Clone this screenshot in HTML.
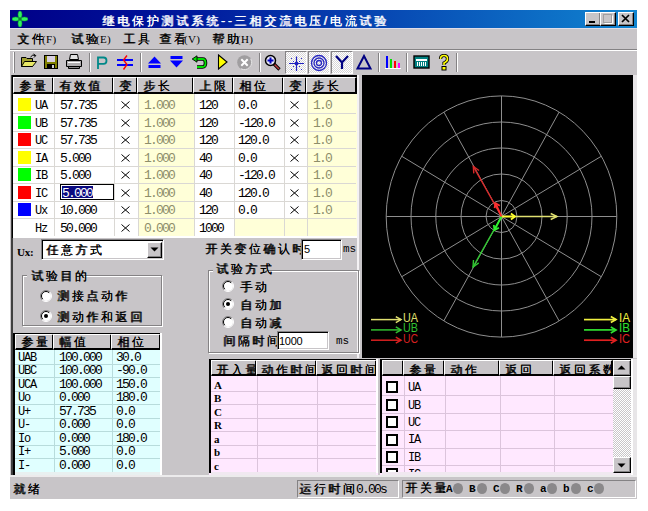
<!DOCTYPE html><html><head><meta charset="utf-8"><title>继电保护测试系统--三相交流电压/电流试验</title><style>
html,body{margin:0;padding:0;background:#fff;width:648px;height:511px;overflow:hidden;position:relative;}
div{box-sizing:border-box;}
svg{display:block;}
</style></head><body>
<div style="position:absolute;left:10px;top:28px;width:627px;height:471px;background:#c8c5c8;"></div>
<div style="position:absolute;left:10px;top:10px;width:627px;height:18px;background:linear-gradient(to right,#000088 0%,#00149a 25%,#1084d0 100%);"></div>
<svg style="position:absolute;left:12px;top:10px" width="16" height="18" viewBox="0 0 16 18"><g fill="#30f060" stroke="#10a030" stroke-width="0.6"><ellipse cx="8" cy="4.6" rx="2" ry="3.6"/><ellipse cx="8" cy="13.4" rx="2" ry="3.6"/><ellipse cx="3.6" cy="9" rx="3.6" ry="2"/><ellipse cx="12.4" cy="9" rx="3.6" ry="2"/></g><rect x="6.5" y="7.5" width="3" height="3" fill="#108030"/></svg>
<div style="position:absolute;left:102px;top:15px;font-family:'Liberation Sans',sans-serif;font-size:12px;line-height:12px;letter-spacing:2.6px;white-space:nowrap;text-shadow:0.7px 0.4px 0 currentColor;color:#fff;letter-spacing:2.85px;">继电保护测试系统--三相交流电压/电流试验</div>
<div style="position:absolute;left:585px;top:12px;width:16px;height:14px;background:#c8c5c8;border-top:1px solid #fff;border-left:1px solid #fff;border-right:1px solid #000;border-bottom:1px solid #000;box-shadow:inset -1px -1px 0 #848284;"></div>
<svg style="position:absolute;left:585px;top:12px" width="16" height="14" viewBox="0 0 16 14"><rect x="4" y="9" width="6" height="2" fill="#000"/></svg>
<div style="position:absolute;left:600px;top:12px;width:16px;height:14px;background:#c8c5c8;border-top:1px solid #fff;border-left:1px solid #fff;border-right:1px solid #000;border-bottom:1px solid #000;box-shadow:inset -1px -1px 0 #848284;"></div>
<svg style="position:absolute;left:600px;top:12px" width="16" height="14" viewBox="0 0 16 14"><rect x="3.5" y="2.5" width="8" height="8" fill="none" stroke="#a09ea0"/><path d="M4.5 11.5 H12.5 V3.5" stroke="#fff" fill="none"/></svg>
<div style="position:absolute;left:618px;top:12px;width:16px;height:14px;background:#c8c5c8;border-top:1px solid #fff;border-left:1px solid #fff;border-right:1px solid #000;border-bottom:1px solid #000;box-shadow:inset -1px -1px 0 #848284;"></div>
<svg style="position:absolute;left:618px;top:12px" width="16" height="14" viewBox="0 0 16 14"><path d="M4 3 L11 10 M11 3 L4 10" stroke="#000" stroke-width="1.7"/></svg>
<div style="position:absolute;left:10px;top:28px;width:627px;height:1px;background:#e0dde8;"></div>
<div style="position:absolute;left:17px;top:33px;font-family:'Liberation Sans',sans-serif;font-size:12px;line-height:12px;letter-spacing:2.6px;white-space:nowrap;text-shadow:0.7px 0.4px 0 currentColor;color:#000;">文件</div>
<div style="position:absolute;left:42px;top:33px;font-family:'Liberation Serif',serif;font-size:12px;line-height:12px;white-space:nowrap;color:#000;font-size:11px;letter-spacing:0.3px;">(F)</div>
<div style="position:absolute;left:71px;top:33px;font-family:'Liberation Sans',sans-serif;font-size:12px;line-height:12px;letter-spacing:2.6px;white-space:nowrap;text-shadow:0.7px 0.4px 0 currentColor;color:#000;">试验</div>
<div style="position:absolute;left:96px;top:33px;font-family:'Liberation Serif',serif;font-size:12px;line-height:12px;white-space:nowrap;color:#000;font-size:11px;letter-spacing:0.3px;">(E)</div>
<div style="position:absolute;left:123px;top:33px;font-family:'Liberation Sans',sans-serif;font-size:12px;line-height:12px;letter-spacing:2.6px;white-space:nowrap;text-shadow:0.7px 0.4px 0 currentColor;color:#000;">工具</div>
<div style="position:absolute;left:159px;top:33px;font-family:'Liberation Sans',sans-serif;font-size:12px;line-height:12px;letter-spacing:2.6px;white-space:nowrap;text-shadow:0.7px 0.4px 0 currentColor;color:#000;">查看</div>
<div style="position:absolute;left:184px;top:33px;font-family:'Liberation Serif',serif;font-size:12px;line-height:12px;white-space:nowrap;color:#000;font-size:11px;letter-spacing:0.3px;">(V)</div>
<div style="position:absolute;left:212px;top:33px;font-family:'Liberation Sans',sans-serif;font-size:12px;line-height:12px;letter-spacing:2.6px;white-space:nowrap;text-shadow:0.7px 0.4px 0 currentColor;color:#000;">帮助</div>
<div style="position:absolute;left:237px;top:33px;font-family:'Liberation Serif',serif;font-size:12px;line-height:12px;white-space:nowrap;color:#000;font-size:11px;letter-spacing:0.3px;">(H)</div>
<div style="position:absolute;left:10px;top:49px;width:627px;height:1px;background:#848284;"></div>
<div style="position:absolute;left:10px;top:50px;width:627px;height:1px;background:#fff;"></div>
<div style="position:absolute;left:13px;top:52px;width:1px;height:21px;background:#fff;"></div>
<div style="position:absolute;left:14px;top:52px;width:1px;height:21px;background:#848284;"></div>
<div style="position:absolute;left:89px;top:53px;width:1px;height:19px;background:#848284;"></div>
<div style="position:absolute;left:90px;top:53px;width:1px;height:19px;background:#fff;"></div>
<div style="position:absolute;left:140px;top:53px;width:1px;height:19px;background:#848284;"></div>
<div style="position:absolute;left:141px;top:53px;width:1px;height:19px;background:#fff;"></div>
<div style="position:absolute;left:259px;top:53px;width:1px;height:19px;background:#848284;"></div>
<div style="position:absolute;left:260px;top:53px;width:1px;height:19px;background:#fff;"></div>
<div style="position:absolute;left:378px;top:53px;width:1px;height:19px;background:#848284;"></div>
<div style="position:absolute;left:379px;top:53px;width:1px;height:19px;background:#fff;"></div>
<div style="position:absolute;left:406px;top:53px;width:1px;height:19px;background:#848284;"></div>
<div style="position:absolute;left:407px;top:53px;width:1px;height:19px;background:#fff;"></div>
<div style="position:absolute;left:456px;top:53px;width:1px;height:19px;background:#848284;"></div>
<div style="position:absolute;left:457px;top:53px;width:1px;height:19px;background:#fff;"></div>
<div style="position:absolute;left:285px;top:51px;width:22px;height:23px;background:repeating-conic-gradient(#ffffff 0% 25%, #d8d6d8 0% 50%) 0 0/2px 2px;border-top:1px solid #848284;border-left:1px solid #848284;border-right:1px solid #fff;border-bottom:1px solid #fff;"></div>
<div style="position:absolute;left:308px;top:51px;width:22px;height:23px;background:repeating-conic-gradient(#ffffff 0% 25%, #d8d6d8 0% 50%) 0 0/2px 2px;border-top:1px solid #848284;border-left:1px solid #848284;border-right:1px solid #fff;border-bottom:1px solid #fff;"></div>
<div style="position:absolute;left:331px;top:51px;width:22px;height:23px;background:repeating-conic-gradient(#ffffff 0% 25%, #d8d6d8 0% 50%) 0 0/2px 2px;border-top:1px solid #848284;border-left:1px solid #848284;border-right:1px solid #fff;border-bottom:1px solid #fff;"></div>
<svg style="position:absolute;left:20px;top:53px" width="18" height="16" viewBox="0 0 18 16"><path d="M1.5 4.5 H6 L7 5.5 H12.5 V13.5 H1.5 Z" fill="#a0a030" stroke="#000"/><path d="M1.5 13.5 L4.5 8.5 H16.5 L12.5 13.5 Z" fill="#e8e868" stroke="#000"/><path d="M10.5 4 Q12.5 1 15.5 2.5" stroke="#000" fill="none"/><path d="M13.5 1 L15.8 2.6 L14 4.5" stroke="#000" fill="none"/></svg>
<svg style="position:absolute;left:43px;top:54px" width="16" height="16" viewBox="0 0 16 16"><rect x="1.5" y="1.5" width="13" height="13" fill="#808000" stroke="#000"/><rect x="4" y="2" width="8" height="6" fill="#d8d0e0"/><rect x="4" y="10" width="8" height="5" fill="#000"/><rect x="9" y="11" width="2" height="3" fill="#d0d0d0"/></svg>
<svg style="position:absolute;left:65px;top:53px" width="18" height="17" viewBox="0 0 18 17"><path d="M5.5 1.5 H12.5 L13.5 6.5 H4.5 Z" fill="#e0e0e0" stroke="#000"/><path d="M1.5 7.5 H16.5 V13.5 H1.5 Z" fill="#b0aeb0" stroke="#000"/><rect x="3" y="9" width="12" height="1" fill="#fff"/><path d="M3.5 13.5 H14.5 V15.5 H3.5 Z" fill="#848284" stroke="#000" stroke-width="1"/></svg>
<svg style="position:absolute;left:95px;top:54px" width="14" height="16" viewBox="0 0 14 16"><path d="M3 15 V3.5 H8.5 Q11.5 3.5 11.5 6.7 Q11.5 9.8 8.5 9.8 H3" fill="none" stroke="#008888" stroke-width="1.8"/></svg>
<svg style="position:absolute;left:116px;top:54px" width="18" height="17" viewBox="0 0 18 17"><rect x="1" y="5" width="16" height="2" fill="#0000ff"/><rect x="1" y="10" width="16" height="2" fill="#0000ff"/><path d="M11 1.5 L7.5 6 L11 10.5 L7.5 15.5" fill="none" stroke="#ff0000" stroke-width="1.4"/></svg>
<svg style="position:absolute;left:147px;top:55px" width="15" height="14" viewBox="0 0 15 14"><path d="M7.5 1.5 L14 8.5 H1 Z" fill="#0000ff"/><rect x="1.5" y="10" width="12" height="3" fill="#0000ff"/></svg>
<svg style="position:absolute;left:169px;top:55px" width="15" height="14" viewBox="0 0 15 14"><rect x="1.5" y="1" width="12" height="3" fill="#0000ff"/><path d="M1 5.5 H14 L7.5 12.5 Z" fill="#0000ff"/></svg>
<svg style="position:absolute;left:191px;top:55px" width="17" height="14" viewBox="0 0 17 14"><path d="M4.5 4 H11.5 Q14.5 4 14.5 8 Q14.5 12 11.5 12 H6" fill="none" stroke="#000" stroke-width="3.6"/><path d="M4.5 4 H11.5 Q14.5 4 14.5 8 Q14.5 12 11.5 12 H6" fill="none" stroke="#00e000" stroke-width="1.8"/><path d="M1.2 4 L6 0.8 V7.2 Z" fill="#00e000" stroke="#000" stroke-width="0.9"/></svg>
<svg style="position:absolute;left:217px;top:54px" width="11" height="16" viewBox="0 0 11 16"><path d="M1.5 1 L10 8 L1.5 15 Z" fill="#ffff00" stroke="#000" stroke-width="1.1"/></svg>
<svg style="position:absolute;left:236px;top:54px" width="17" height="17" viewBox="0 0 17 17"><circle cx="8.5" cy="8.5" r="7.3" fill="#a09ea0"/><path d="M5.3 5.3 L11.7 11.7 M11.7 5.3 L5.3 11.7" stroke="#fff" stroke-width="2"/><path d="M14.8 5 A7.3 7.3 0 0 1 5 14.8" fill="none" stroke="#e8e8e8" stroke-width="1"/></svg>
<svg style="position:absolute;left:264px;top:54px" width="17" height="17" viewBox="0 0 17 17"><path d="M10 10 L15.5 15.5" stroke="#000" stroke-width="3.2"/><path d="M10.5 10.5 L15 15" stroke="#c04040" stroke-width="1.4"/><circle cx="6.5" cy="6.5" r="5" fill="#e8e8f8" stroke="#000" stroke-width="1.5"/><path d="M3.5 6.5 H9.5 M6.5 3.5 V9.5" stroke="#0000c0" stroke-width="2"/></svg>
<svg style="position:absolute;left:286px;top:55px" width="20" height="17" viewBox="0 0 20 17"><path d="M3 8.5 H18 M10.5 1.5 V16" stroke="#2020c0" stroke-width="1.2"/><rect x="9" y="7" width="3" height="3" fill="#2020c0"/><g fill="#3030d0"><rect x="7" y="6" width="1" height="1"/><rect x="13" y="6" width="1" height="1"/><rect x="7" y="11" width="1" height="1"/><rect x="13" y="11" width="1" height="1"/><rect x="5" y="3" width="1" height="1"/><rect x="15" y="3" width="1" height="1"/><rect x="5" y="14" width="1" height="1"/><rect x="15" y="14" width="1" height="1"/></g></svg>
<svg style="position:absolute;left:310px;top:54px" width="18" height="18" viewBox="0 0 18 18"><circle cx="9" cy="9" r="7.5" fill="none" stroke="#2828c0" stroke-width="1.3"/><circle cx="9" cy="9" r="5" fill="none" stroke="#2828c0" stroke-width="1.3"/><circle cx="9" cy="9" r="2.5" fill="none" stroke="#2828c0" stroke-width="1.3"/></svg>
<svg style="position:absolute;left:334px;top:54px" width="16" height="16" viewBox="0 0 16 16"><path d="M2 2 L8 8.5 L14 2 M8 8.5 V15" fill="none" stroke="#000080" stroke-width="2.2"/></svg>
<svg style="position:absolute;left:356px;top:54px" width="16" height="16" viewBox="0 0 16 16"><path d="M8 2 L14.5 14.5 H1.5 Z" fill="none" stroke="#000080" stroke-width="2"/></svg>
<svg style="position:absolute;left:385px;top:54px" width="16" height="16" viewBox="0 0 16 16"><rect x="1" y="2" width="2" height="12" fill="#0000ff"/><rect x="5" y="5" width="2" height="9" fill="#00e000"/><rect x="9" y="7" width="2" height="7" fill="#ff0000"/><rect x="13" y="9" width="2" height="5" fill="#ff00ff"/><rect x="0" y="14" width="16" height="1" fill="#fff"/></svg>
<svg style="position:absolute;left:413px;top:55px" width="17" height="14" viewBox="0 0 17 14"><rect x="1" y="1" width="15" height="12" fill="#008080" stroke="#000" stroke-width="1.4"/><rect x="3" y="4" width="11" height="2" fill="#fff"/><path d="M4.5 7 V11 M6.5 7 V11 M8.5 7 V11 M10.5 7 V11 M12.5 7 V11" stroke="#fff" stroke-width="1"/></svg>
<svg style="position:absolute;left:438px;top:54px" width="12" height="17" viewBox="0 0 12 17"><path d="M2.5 5 Q2.5 1.5 6 1.5 Q9.5 1.5 9.5 5 Q9.5 7.5 6 9 V11" fill="none" stroke="#000" stroke-width="3.2"/><path d="M2.5 5 Q2.5 1.5 6 1.5 Q9.5 1.5 9.5 5 Q9.5 7.5 6 9 V11" fill="none" stroke="#ffff00" stroke-width="1.6"/><rect x="4" y="12.5" width="4" height="3.5" fill="#ffff00" stroke="#000" stroke-width="1"/></svg>
<div style="position:absolute;left:11px;top:75px;width:351px;height:163px;background:#fff;"></div>
<div style="position:absolute;left:11px;top:75px;width:2px;height:163px;background:#000;"></div>
<div style="position:absolute;left:11px;top:75px;width:351px;height:2px;background:#000;"></div>
<div style="position:absolute;left:11px;top:75px;width:1px;height:163px;background:#404040;"></div>
<div style="position:absolute;left:138px;top:94px;width:56px;height:142px;background:#ffffd8;"></div>
<div style="position:absolute;left:307px;top:94px;width:50px;height:142px;background:#ffffd8;"></div>
<div style="position:absolute;left:234px;top:218px;width:123px;height:18px;background:#ffffd8;"></div>
<div style="position:absolute;left:13px;top:113px;width:343px;height:1px;background:#dad8d4;"></div>
<div style="position:absolute;left:13px;top:131px;width:343px;height:1px;background:#dad8d4;"></div>
<div style="position:absolute;left:13px;top:148px;width:343px;height:1px;background:#dad8d4;"></div>
<div style="position:absolute;left:13px;top:166px;width:343px;height:1px;background:#dad8d4;"></div>
<div style="position:absolute;left:13px;top:183px;width:343px;height:1px;background:#dad8d4;"></div>
<div style="position:absolute;left:13px;top:201px;width:343px;height:1px;background:#dad8d4;"></div>
<div style="position:absolute;left:13px;top:218px;width:343px;height:1px;background:#dad8d4;"></div>
<div style="position:absolute;left:13px;top:236px;width:343px;height:1px;background:#dad8d4;"></div>
<div style="position:absolute;left:54px;top:94px;width:1px;height:142px;background:#dad8d4;"></div>
<div style="position:absolute;left:114px;top:94px;width:1px;height:142px;background:#dad8d4;"></div>
<div style="position:absolute;left:138px;top:94px;width:1px;height:142px;background:#dad8d4;"></div>
<div style="position:absolute;left:194px;top:94px;width:1px;height:142px;background:#dad8d4;"></div>
<div style="position:absolute;left:234px;top:94px;width:1px;height:142px;background:#dad8d4;"></div>
<div style="position:absolute;left:284px;top:94px;width:1px;height:142px;background:#dad8d4;"></div>
<div style="position:absolute;left:307px;top:94px;width:1px;height:142px;background:#dad8d4;"></div>
<div style="position:absolute;left:357px;top:94px;width:1px;height:142px;background:#dad8d4;"></div>
<div style="position:absolute;left:13px;top:77px;width:41px;height:17px;background:#c8c5c8;border-top:1px solid #fff;border-left:1px solid #fff;border-right:2px solid #000;border-bottom:2px solid #000;"></div>
<div style="position:absolute;left:19px;top:80px;font-family:'Liberation Sans',sans-serif;font-size:12px;line-height:12px;letter-spacing:2.6px;white-space:nowrap;text-shadow:0.7px 0.4px 0 currentColor;color:#000;">参量</div>
<div style="position:absolute;left:53px;top:77px;width:61px;height:17px;background:#c8c5c8;border-top:1px solid #fff;border-left:1px solid #fff;border-right:2px solid #000;border-bottom:2px solid #000;"></div>
<div style="position:absolute;left:59px;top:80px;font-family:'Liberation Sans',sans-serif;font-size:12px;line-height:12px;letter-spacing:2.6px;white-space:nowrap;text-shadow:0.7px 0.4px 0 currentColor;color:#000;">有效值</div>
<div style="position:absolute;left:113px;top:77px;width:25px;height:17px;background:#c8c5c8;border-top:1px solid #fff;border-left:1px solid #fff;border-right:2px solid #000;border-bottom:2px solid #000;"></div>
<div style="position:absolute;left:119px;top:80px;font-family:'Liberation Sans',sans-serif;font-size:12px;line-height:12px;letter-spacing:2.6px;white-space:nowrap;text-shadow:0.7px 0.4px 0 currentColor;color:#000;">变</div>
<div style="position:absolute;left:137px;top:77px;width:57px;height:17px;background:#c8c5c8;border-top:1px solid #fff;border-left:1px solid #fff;border-right:2px solid #000;border-bottom:2px solid #000;"></div>
<div style="position:absolute;left:143px;top:80px;font-family:'Liberation Sans',sans-serif;font-size:12px;line-height:12px;letter-spacing:2.6px;white-space:nowrap;text-shadow:0.7px 0.4px 0 currentColor;color:#000;">步长</div>
<div style="position:absolute;left:193px;top:77px;width:41px;height:17px;background:#c8c5c8;border-top:1px solid #fff;border-left:1px solid #fff;border-right:2px solid #000;border-bottom:2px solid #000;"></div>
<div style="position:absolute;left:199px;top:80px;font-family:'Liberation Sans',sans-serif;font-size:12px;line-height:12px;letter-spacing:2.6px;white-space:nowrap;text-shadow:0.7px 0.4px 0 currentColor;color:#000;">上限</div>
<div style="position:absolute;left:233px;top:77px;width:51px;height:17px;background:#c8c5c8;border-top:1px solid #fff;border-left:1px solid #fff;border-right:2px solid #000;border-bottom:2px solid #000;"></div>
<div style="position:absolute;left:239px;top:80px;font-family:'Liberation Sans',sans-serif;font-size:12px;line-height:12px;letter-spacing:2.6px;white-space:nowrap;text-shadow:0.7px 0.4px 0 currentColor;color:#000;">相位</div>
<div style="position:absolute;left:283px;top:77px;width:24px;height:17px;background:#c8c5c8;border-top:1px solid #fff;border-left:1px solid #fff;border-right:2px solid #000;border-bottom:2px solid #000;"></div>
<div style="position:absolute;left:289px;top:80px;font-family:'Liberation Sans',sans-serif;font-size:12px;line-height:12px;letter-spacing:2.6px;white-space:nowrap;text-shadow:0.7px 0.4px 0 currentColor;color:#000;">变</div>
<div style="position:absolute;left:306px;top:77px;width:51px;height:17px;background:#c8c5c8;border-top:1px solid #fff;border-left:1px solid #fff;border-right:2px solid #000;border-bottom:2px solid #000;"></div>
<div style="position:absolute;left:312px;top:80px;font-family:'Liberation Sans',sans-serif;font-size:12px;line-height:12px;letter-spacing:2.6px;white-space:nowrap;text-shadow:0.7px 0.4px 0 currentColor;color:#000;">步长</div>
<div style="position:absolute;left:18px;top:98px;width:13px;height:13px;background:#ffff00;"></div>
<div style="position:absolute;left:35px;top:100px;font-family:'Liberation Mono',monospace;font-size:12px;line-height:12px;letter-spacing:-1.2px;white-space:nowrap;color:#000;">UA</div>
<div style="position:absolute;left:60px;top:100px;font-family:'Liberation Mono',monospace;font-size:13px;line-height:12px;letter-spacing:-1.8px;white-space:nowrap;color:#000;">57.735</div>
<svg style="position:absolute;left:120.5px;top:100.5px" width="9" height="8" viewBox="0 0 9 8"><path d="M0.5 0.5 L8.5 7.5 M8.5 0.5 L0.5 7.5" stroke="#000" stroke-width="1"/></svg>
<div style="position:absolute;left:144px;top:100px;font-family:'Liberation Mono',monospace;font-size:13px;line-height:12px;letter-spacing:-1.8px;white-space:nowrap;color:#8e8e6a;">1.000</div>
<div style="position:absolute;left:199px;top:100px;font-family:'Liberation Mono',monospace;font-size:13px;line-height:12px;letter-spacing:-1.8px;white-space:nowrap;color:#000;">120</div>
<div style="position:absolute;left:238px;top:100px;font-family:'Liberation Mono',monospace;font-size:13px;line-height:12px;letter-spacing:-1.8px;white-space:nowrap;color:#000;">0.0</div>
<svg style="position:absolute;left:289.5px;top:100.5px" width="9" height="8" viewBox="0 0 9 8"><path d="M0.5 0.5 L8.5 7.5 M8.5 0.5 L0.5 7.5" stroke="#000" stroke-width="1"/></svg>
<div style="position:absolute;left:313px;top:100px;font-family:'Liberation Mono',monospace;font-size:13px;line-height:12px;letter-spacing:-1.8px;white-space:nowrap;color:#8e8e6a;">1.0</div>
<div style="position:absolute;left:18px;top:116px;width:13px;height:13px;background:#00ff00;"></div>
<div style="position:absolute;left:35px;top:118px;font-family:'Liberation Mono',monospace;font-size:12px;line-height:12px;letter-spacing:-1.2px;white-space:nowrap;color:#000;">UB</div>
<div style="position:absolute;left:60px;top:118px;font-family:'Liberation Mono',monospace;font-size:13px;line-height:12px;letter-spacing:-1.8px;white-space:nowrap;color:#000;">57.735</div>
<svg style="position:absolute;left:120.5px;top:118.5px" width="9" height="8" viewBox="0 0 9 8"><path d="M0.5 0.5 L8.5 7.5 M8.5 0.5 L0.5 7.5" stroke="#000" stroke-width="1"/></svg>
<div style="position:absolute;left:144px;top:118px;font-family:'Liberation Mono',monospace;font-size:13px;line-height:12px;letter-spacing:-1.8px;white-space:nowrap;color:#8e8e6a;">1.000</div>
<div style="position:absolute;left:199px;top:118px;font-family:'Liberation Mono',monospace;font-size:13px;line-height:12px;letter-spacing:-1.8px;white-space:nowrap;color:#000;">120</div>
<div style="position:absolute;left:238px;top:118px;font-family:'Liberation Mono',monospace;font-size:13px;line-height:12px;letter-spacing:-1.8px;white-space:nowrap;color:#000;">-120.0</div>
<svg style="position:absolute;left:289.5px;top:118.5px" width="9" height="8" viewBox="0 0 9 8"><path d="M0.5 0.5 L8.5 7.5 M8.5 0.5 L0.5 7.5" stroke="#000" stroke-width="1"/></svg>
<div style="position:absolute;left:313px;top:118px;font-family:'Liberation Mono',monospace;font-size:13px;line-height:12px;letter-spacing:-1.8px;white-space:nowrap;color:#8e8e6a;">1.0</div>
<div style="position:absolute;left:18px;top:133px;width:13px;height:13px;background:#ff0000;"></div>
<div style="position:absolute;left:35px;top:135px;font-family:'Liberation Mono',monospace;font-size:12px;line-height:12px;letter-spacing:-1.2px;white-space:nowrap;color:#000;">UC</div>
<div style="position:absolute;left:60px;top:135px;font-family:'Liberation Mono',monospace;font-size:13px;line-height:12px;letter-spacing:-1.8px;white-space:nowrap;color:#000;">57.735</div>
<svg style="position:absolute;left:120.5px;top:135.5px" width="9" height="8" viewBox="0 0 9 8"><path d="M0.5 0.5 L8.5 7.5 M8.5 0.5 L0.5 7.5" stroke="#000" stroke-width="1"/></svg>
<div style="position:absolute;left:144px;top:135px;font-family:'Liberation Mono',monospace;font-size:13px;line-height:12px;letter-spacing:-1.8px;white-space:nowrap;color:#8e8e6a;">1.000</div>
<div style="position:absolute;left:199px;top:135px;font-family:'Liberation Mono',monospace;font-size:13px;line-height:12px;letter-spacing:-1.8px;white-space:nowrap;color:#000;">120</div>
<div style="position:absolute;left:238px;top:135px;font-family:'Liberation Mono',monospace;font-size:13px;line-height:12px;letter-spacing:-1.8px;white-space:nowrap;color:#000;">120.0</div>
<svg style="position:absolute;left:289.5px;top:135.5px" width="9" height="8" viewBox="0 0 9 8"><path d="M0.5 0.5 L8.5 7.5 M8.5 0.5 L0.5 7.5" stroke="#000" stroke-width="1"/></svg>
<div style="position:absolute;left:313px;top:135px;font-family:'Liberation Mono',monospace;font-size:13px;line-height:12px;letter-spacing:-1.8px;white-space:nowrap;color:#8e8e6a;">1.0</div>
<div style="position:absolute;left:18px;top:151px;width:13px;height:13px;background:#ffff00;"></div>
<div style="position:absolute;left:35px;top:153px;font-family:'Liberation Mono',monospace;font-size:12px;line-height:12px;letter-spacing:-1.2px;white-space:nowrap;color:#000;">IA</div>
<div style="position:absolute;left:60px;top:153px;font-family:'Liberation Mono',monospace;font-size:13px;line-height:12px;letter-spacing:-1.8px;white-space:nowrap;color:#000;">5.000</div>
<svg style="position:absolute;left:120.5px;top:153.5px" width="9" height="8" viewBox="0 0 9 8"><path d="M0.5 0.5 L8.5 7.5 M8.5 0.5 L0.5 7.5" stroke="#000" stroke-width="1"/></svg>
<div style="position:absolute;left:144px;top:153px;font-family:'Liberation Mono',monospace;font-size:13px;line-height:12px;letter-spacing:-1.8px;white-space:nowrap;color:#8e8e6a;">1.000</div>
<div style="position:absolute;left:199px;top:153px;font-family:'Liberation Mono',monospace;font-size:13px;line-height:12px;letter-spacing:-1.8px;white-space:nowrap;color:#000;">40</div>
<div style="position:absolute;left:238px;top:153px;font-family:'Liberation Mono',monospace;font-size:13px;line-height:12px;letter-spacing:-1.8px;white-space:nowrap;color:#000;">0.0</div>
<svg style="position:absolute;left:289.5px;top:153.5px" width="9" height="8" viewBox="0 0 9 8"><path d="M0.5 0.5 L8.5 7.5 M8.5 0.5 L0.5 7.5" stroke="#000" stroke-width="1"/></svg>
<div style="position:absolute;left:313px;top:153px;font-family:'Liberation Mono',monospace;font-size:13px;line-height:12px;letter-spacing:-1.8px;white-space:nowrap;color:#8e8e6a;">1.0</div>
<div style="position:absolute;left:18px;top:168px;width:13px;height:13px;background:#00ff00;"></div>
<div style="position:absolute;left:35px;top:170px;font-family:'Liberation Mono',monospace;font-size:12px;line-height:12px;letter-spacing:-1.2px;white-space:nowrap;color:#000;">IB</div>
<div style="position:absolute;left:60px;top:170px;font-family:'Liberation Mono',monospace;font-size:13px;line-height:12px;letter-spacing:-1.8px;white-space:nowrap;color:#000;">5.000</div>
<svg style="position:absolute;left:120.5px;top:170.5px" width="9" height="8" viewBox="0 0 9 8"><path d="M0.5 0.5 L8.5 7.5 M8.5 0.5 L0.5 7.5" stroke="#000" stroke-width="1"/></svg>
<div style="position:absolute;left:144px;top:170px;font-family:'Liberation Mono',monospace;font-size:13px;line-height:12px;letter-spacing:-1.8px;white-space:nowrap;color:#8e8e6a;">1.000</div>
<div style="position:absolute;left:199px;top:170px;font-family:'Liberation Mono',monospace;font-size:13px;line-height:12px;letter-spacing:-1.8px;white-space:nowrap;color:#000;">40</div>
<div style="position:absolute;left:238px;top:170px;font-family:'Liberation Mono',monospace;font-size:13px;line-height:12px;letter-spacing:-1.8px;white-space:nowrap;color:#000;">-120.0</div>
<svg style="position:absolute;left:289.5px;top:170.5px" width="9" height="8" viewBox="0 0 9 8"><path d="M0.5 0.5 L8.5 7.5 M8.5 0.5 L0.5 7.5" stroke="#000" stroke-width="1"/></svg>
<div style="position:absolute;left:313px;top:170px;font-family:'Liberation Mono',monospace;font-size:13px;line-height:12px;letter-spacing:-1.8px;white-space:nowrap;color:#8e8e6a;">1.0</div>
<div style="position:absolute;left:18px;top:186px;width:13px;height:13px;background:#ff0000;"></div>
<div style="position:absolute;left:35px;top:188px;font-family:'Liberation Mono',monospace;font-size:12px;line-height:12px;letter-spacing:-1.2px;white-space:nowrap;color:#000;">IC</div>
<div style="position:absolute;left:60px;top:184px;width:54px;height:16px;background:#fff;border:1px solid #000;"></div>
<div style="position:absolute;left:62px;top:186px;width:31px;height:12px;background:#0a0a80;"></div>
<div style="position:absolute;left:62px;top:188px;font-family:'Liberation Mono',monospace;font-size:13px;line-height:12px;letter-spacing:-1.8px;white-space:nowrap;color:#fff;">5.000</div>
<svg style="position:absolute;left:120.5px;top:188.5px" width="9" height="8" viewBox="0 0 9 8"><path d="M0.5 0.5 L8.5 7.5 M8.5 0.5 L0.5 7.5" stroke="#000" stroke-width="1"/></svg>
<div style="position:absolute;left:144px;top:188px;font-family:'Liberation Mono',monospace;font-size:13px;line-height:12px;letter-spacing:-1.8px;white-space:nowrap;color:#8e8e6a;">1.000</div>
<div style="position:absolute;left:199px;top:188px;font-family:'Liberation Mono',monospace;font-size:13px;line-height:12px;letter-spacing:-1.8px;white-space:nowrap;color:#000;">40</div>
<div style="position:absolute;left:238px;top:188px;font-family:'Liberation Mono',monospace;font-size:13px;line-height:12px;letter-spacing:-1.8px;white-space:nowrap;color:#000;">120.0</div>
<svg style="position:absolute;left:289.5px;top:188.5px" width="9" height="8" viewBox="0 0 9 8"><path d="M0.5 0.5 L8.5 7.5 M8.5 0.5 L0.5 7.5" stroke="#000" stroke-width="1"/></svg>
<div style="position:absolute;left:313px;top:188px;font-family:'Liberation Mono',monospace;font-size:13px;line-height:12px;letter-spacing:-1.8px;white-space:nowrap;color:#8e8e6a;">1.0</div>
<div style="position:absolute;left:18px;top:203px;width:13px;height:13px;background:#0000ff;"></div>
<div style="position:absolute;left:35px;top:205px;font-family:'Liberation Mono',monospace;font-size:12px;line-height:12px;letter-spacing:-1.2px;white-space:nowrap;color:#000;">Ux</div>
<div style="position:absolute;left:60px;top:205px;font-family:'Liberation Mono',monospace;font-size:13px;line-height:12px;letter-spacing:-1.8px;white-space:nowrap;color:#000;">10.000</div>
<svg style="position:absolute;left:120.5px;top:205.5px" width="9" height="8" viewBox="0 0 9 8"><path d="M0.5 0.5 L8.5 7.5 M8.5 0.5 L0.5 7.5" stroke="#000" stroke-width="1"/></svg>
<div style="position:absolute;left:144px;top:205px;font-family:'Liberation Mono',monospace;font-size:13px;line-height:12px;letter-spacing:-1.8px;white-space:nowrap;color:#8e8e6a;">1.000</div>
<div style="position:absolute;left:199px;top:205px;font-family:'Liberation Mono',monospace;font-size:13px;line-height:12px;letter-spacing:-1.8px;white-space:nowrap;color:#000;">120</div>
<div style="position:absolute;left:238px;top:205px;font-family:'Liberation Mono',monospace;font-size:13px;line-height:12px;letter-spacing:-1.8px;white-space:nowrap;color:#000;">0.0</div>
<svg style="position:absolute;left:289.5px;top:205.5px" width="9" height="8" viewBox="0 0 9 8"><path d="M0.5 0.5 L8.5 7.5 M8.5 0.5 L0.5 7.5" stroke="#000" stroke-width="1"/></svg>
<div style="position:absolute;left:313px;top:205px;font-family:'Liberation Mono',monospace;font-size:13px;line-height:12px;letter-spacing:-1.8px;white-space:nowrap;color:#8e8e6a;">1.0</div>
<div style="position:absolute;left:35px;top:223px;font-family:'Liberation Mono',monospace;font-size:12px;line-height:12px;letter-spacing:-1.2px;white-space:nowrap;color:#000;">Hz</div>
<div style="position:absolute;left:60px;top:223px;font-family:'Liberation Mono',monospace;font-size:13px;line-height:12px;letter-spacing:-1.8px;white-space:nowrap;color:#000;">50.000</div>
<svg style="position:absolute;left:120.5px;top:223.5px" width="9" height="8" viewBox="0 0 9 8"><path d="M0.5 0.5 L8.5 7.5 M8.5 0.5 L0.5 7.5" stroke="#000" stroke-width="1"/></svg>
<div style="position:absolute;left:144px;top:223px;font-family:'Liberation Mono',monospace;font-size:13px;line-height:12px;letter-spacing:-1.8px;white-space:nowrap;color:#8e8e6a;">0.000</div>
<div style="position:absolute;left:199px;top:223px;font-family:'Liberation Mono',monospace;font-size:13px;line-height:12px;letter-spacing:-1.8px;white-space:nowrap;color:#000;">1000</div>
<div style="position:absolute;left:13px;top:236px;width:345px;height:2px;background:#fff;"></div>
<div style="position:absolute;left:357px;top:75px;width:5px;height:283px;background:#c8c5c8;"></div>
<div style="position:absolute;left:357px;top:75px;width:2px;height:283px;background:#f4f2f4;"></div>
<svg style="position:absolute;left:362px;top:75px" width="271" height="283" viewBox="362 75 271 283"><rect x="362" y="75" width="271" height="283" fill="#000"/><ellipse cx="501.5" cy="216.5" rx="15.5" ry="16" fill="none" stroke="#8e8e8e" stroke-width="1"/><ellipse cx="501.5" cy="216.5" rx="40.5" ry="42.5" fill="none" stroke="#8e8e8e" stroke-width="1"/><ellipse cx="501.5" cy="216.5" rx="65.7" ry="68.5" fill="none" stroke="#8e8e8e" stroke-width="1"/><ellipse cx="501.5" cy="216.5" rx="90.5" ry="94.5" fill="none" stroke="#8e8e8e" stroke-width="1"/><ellipse cx="501.5" cy="216.5" rx="115.3" ry="120.6" fill="none" stroke="#8e8e8e" stroke-width="1"/><line x1="501.5" y1="216.5" x2="616.8" y2="216.5" stroke="#8e8e8e" stroke-width="1"/><line x1="501.5" y1="216.5" x2="601.4" y2="156.2" stroke="#8e8e8e" stroke-width="1"/><line x1="501.5" y1="216.5" x2="559.1" y2="112.1" stroke="#8e8e8e" stroke-width="1"/><line x1="501.5" y1="216.5" x2="501.5" y2="95.9" stroke="#8e8e8e" stroke-width="1"/><line x1="501.5" y1="216.5" x2="443.9" y2="112.1" stroke="#8e8e8e" stroke-width="1"/><line x1="501.5" y1="216.5" x2="401.6" y2="156.2" stroke="#8e8e8e" stroke-width="1"/><line x1="501.5" y1="216.5" x2="386.2" y2="216.5" stroke="#8e8e8e" stroke-width="1"/><line x1="501.5" y1="216.5" x2="401.6" y2="276.8" stroke="#8e8e8e" stroke-width="1"/><line x1="501.5" y1="216.5" x2="443.8" y2="320.9" stroke="#8e8e8e" stroke-width="1"/><line x1="501.5" y1="216.5" x2="501.5" y2="337.1" stroke="#8e8e8e" stroke-width="1"/><line x1="501.5" y1="216.5" x2="559.1" y2="320.9" stroke="#8e8e8e" stroke-width="1"/><line x1="501.5" y1="216.5" x2="601.4" y2="276.8" stroke="#8e8e8e" stroke-width="1"/><line x1="501.5" y1="216.5" x2="557.0" y2="216.5" stroke="#e0e070" stroke-width="1.4"/><path d="M550.7 219.5 L557.0 216.5 L550.7 213.5" fill="none" stroke="#e0e070" stroke-width="1.4"/><line x1="501.5" y1="216.5" x2="473.0" y2="267.0" stroke="#30c830" stroke-width="1.4"/><path d="M473.5 260.0 L473.0 267.0 L478.7 262.9" fill="none" stroke="#30c830" stroke-width="1.4"/><line x1="501.5" y1="216.5" x2="473.3" y2="166.4" stroke="#d82828" stroke-width="1.4"/><path d="M479.0 170.5 L473.3 166.4 L473.8 173.4" fill="none" stroke="#d82828" stroke-width="1.4"/><line x1="501.5" y1="216.5" x2="515.0" y2="216.5" stroke="#ffff30" stroke-width="1.8"/><path d="M510.9 219.4 L515.0 216.5 L510.9 213.6" fill="none" stroke="#ffff30" stroke-width="1.8"/><line x1="501.5" y1="216.5" x2="494.5" y2="230.0" stroke="#30f030" stroke-width="1.8"/><path d="M493.8 225.0 L494.5 230.0 L498.9 227.7" fill="none" stroke="#30f030" stroke-width="1.8"/><line x1="501.5" y1="216.5" x2="495.5" y2="203.2" stroke="#ff3030" stroke-width="1.8"/><path d="M499.8 205.8 L495.5 203.2 L494.6 208.1" fill="none" stroke="#ff3030" stroke-width="1.8"/><line x1="371" y1="319.6" x2="401.0" y2="319.6" stroke="#e0e070" stroke-width="1.5"/><path d="M395.8 322.6 L401.0 319.6 L395.8 316.6" fill="none" stroke="#e0e070" stroke-width="1.5"/><text x="403" y="321.9" font-family="Liberation Sans" font-size="12.5" fill="#e0e070" textLength="15" lengthAdjust="spacingAndGlyphs">UA</text><line x1="371" y1="329.90000000000003" x2="401.0" y2="329.9" stroke="#30c030" stroke-width="1.5"/><path d="M395.8 332.9 L401.0 329.9 L395.8 326.9" fill="none" stroke="#30c030" stroke-width="1.5"/><text x="403" y="332.2" font-family="Liberation Sans" font-size="12.5" fill="#30c030" textLength="15" lengthAdjust="spacingAndGlyphs">UB</text><line x1="371" y1="340.20000000000005" x2="401.0" y2="340.2" stroke="#d82020" stroke-width="1.5"/><path d="M395.8 343.2 L401.0 340.2 L395.8 337.2" fill="none" stroke="#d82020" stroke-width="1.5"/><text x="403" y="342.5" font-family="Liberation Sans" font-size="12.5" fill="#d82020" textLength="15" lengthAdjust="spacingAndGlyphs">UC</text><line x1="584" y1="319.6" x2="616.0" y2="319.6" stroke="#f0f040" stroke-width="1.7"/><path d="M610.8 322.6 L616.0 319.6 L610.8 316.6" fill="none" stroke="#f0f040" stroke-width="1.7"/><text x="619" y="321.9" font-family="Liberation Sans" font-size="12.5" fill="#f0f040" textLength="11" lengthAdjust="spacingAndGlyphs">IA</text><line x1="584" y1="329.90000000000003" x2="616.0" y2="329.9" stroke="#30e030" stroke-width="1.7"/><path d="M610.8 332.9 L616.0 329.9 L610.8 326.9" fill="none" stroke="#30e030" stroke-width="1.7"/><text x="619" y="332.2" font-family="Liberation Sans" font-size="12.5" fill="#30e030" textLength="11" lengthAdjust="spacingAndGlyphs">IB</text><line x1="584" y1="340.20000000000005" x2="616.0" y2="340.2" stroke="#e02020" stroke-width="1.7"/><path d="M610.8 343.2 L616.0 340.2 L610.8 337.2" fill="none" stroke="#e02020" stroke-width="1.7"/><text x="619" y="342.5" font-family="Liberation Sans" font-size="12.5" fill="#e02020" textLength="11" lengthAdjust="spacingAndGlyphs">IC</text></svg>
<div style="position:absolute;left:633px;top:75px;width:4px;height:283px;background:#e8e6e8;"></div>
<div style="position:absolute;left:11px;top:238px;width:2px;height:239px;background:#404040;"></div>
<div style="position:absolute;left:17px;top:246px;font-family:'Liberation Serif',serif;font-size:12px;line-height:12px;white-space:nowrap;color:#000;font-size:11px;font-weight:bold;letter-spacing:-0.2px;">Ux:</div>
<div style="position:absolute;left:41px;top:239px;width:123px;height:21px;background:#fff;border-top:1px solid #848284;border-left:1px solid #848284;border-right:1px solid #fff;border-bottom:1px solid #fff;box-shadow:inset 1px 1px 0 #000, inset -1px -1px 0 #c8c5c8;"></div>
<div style="position:absolute;left:46px;top:244px;font-family:'Liberation Sans',sans-serif;font-size:12px;line-height:12px;letter-spacing:2.6px;white-space:nowrap;text-shadow:0.7px 0.4px 0 currentColor;color:#000;">任意方式</div>
<div style="position:absolute;left:147px;top:242px;width:15px;height:16px;background:#c8c5c8;border-top:1px solid #fff;border-left:1px solid #fff;border-right:1px solid #000;border-bottom:1px solid #000;box-shadow:inset -1px -1px 0 #848284;"></div>
<svg style="position:absolute;left:150px;top:247px" width="9" height="5" viewBox="0 0 9 5"><path d="M0.5 0.5 H8.5 L4.5 4.5 Z" fill="#000"/></svg>
<div style="position:absolute;left:22px;top:275px;width:141px;height:52px;border-top:1px solid #848284;border-left:1px solid #848284;border-right:1px solid #fff;border-bottom:1px solid #fff;box-shadow:inset -1px -1px 0 #848284, 1px 1px 0 #fff inset;"></div>
<div style="position:absolute;left:27px;top:270px;width:53px;height:12px;background:#c8c5c8;"></div>
<div style="position:absolute;left:31px;top:270px;font-family:'Liberation Sans',sans-serif;font-size:12px;line-height:12px;letter-spacing:2.6px;white-space:nowrap;text-shadow:0.7px 0.4px 0 currentColor;color:#000;">试验目的</div>
<svg style="position:absolute;left:40px;top:290px" width="12" height="12" viewBox="0 0 12 12"><circle cx="6" cy="6" r="5" fill="#fff"/><path d="M2.1 9.9 A5.5 5.5 0 0 1 9.9 2.1" stroke="#848284" stroke-width="1" fill="none"/><path d="M2.8 9.2 A4.5 4.5 0 0 1 9.2 2.8" stroke="#000" stroke-width="1" fill="none"/><path d="M9.9 2.1 A5.5 5.5 0 0 1 2.1 9.9" stroke="#fff" stroke-width="1" fill="none"/></svg>
<div style="position:absolute;left:57px;top:290px;font-family:'Liberation Sans',sans-serif;font-size:12px;line-height:12px;letter-spacing:2.6px;white-space:nowrap;text-shadow:0.7px 0.4px 0 currentColor;color:#000;">测接点动作</div>
<svg style="position:absolute;left:40px;top:310px" width="12" height="12" viewBox="0 0 12 12"><circle cx="6" cy="6" r="5" fill="#fff"/><path d="M2.1 9.9 A5.5 5.5 0 0 1 9.9 2.1" stroke="#848284" stroke-width="1" fill="none"/><path d="M2.8 9.2 A4.5 4.5 0 0 1 9.2 2.8" stroke="#000" stroke-width="1" fill="none"/><path d="M9.9 2.1 A5.5 5.5 0 0 1 2.1 9.9" stroke="#fff" stroke-width="1" fill="none"/><circle cx="6" cy="6" r="2" fill="#000"/></svg>
<div style="position:absolute;left:57px;top:311px;font-family:'Liberation Sans',sans-serif;font-size:12px;line-height:12px;letter-spacing:2.6px;white-space:nowrap;text-shadow:0.7px 0.4px 0 currentColor;color:#000;">测动作和返回</div>
<div style="position:absolute;left:13px;top:333px;width:149px;height:144px;background:#e0ffff;"></div>
<div style="position:absolute;left:13px;top:333px;width:2px;height:142px;background:#000;"></div>
<div style="position:absolute;left:13px;top:333px;width:149px;height:1px;background:#000;"></div>
<div style="position:absolute;left:15px;top:364px;width:145px;height:1px;background:#b8dcdc;"></div>
<div style="position:absolute;left:15px;top:377px;width:145px;height:1px;background:#b8dcdc;"></div>
<div style="position:absolute;left:15px;top:391px;width:145px;height:1px;background:#b8dcdc;"></div>
<div style="position:absolute;left:15px;top:404px;width:145px;height:1px;background:#b8dcdc;"></div>
<div style="position:absolute;left:15px;top:418px;width:145px;height:1px;background:#b8dcdc;"></div>
<div style="position:absolute;left:15px;top:431px;width:145px;height:1px;background:#b8dcdc;"></div>
<div style="position:absolute;left:15px;top:445px;width:145px;height:1px;background:#b8dcdc;"></div>
<div style="position:absolute;left:15px;top:458px;width:145px;height:1px;background:#b8dcdc;"></div>
<div style="position:absolute;left:15px;top:472px;width:145px;height:1px;background:#b8dcdc;"></div>
<div style="position:absolute;left:54px;top:350px;width:1px;height:124px;background:#b8dcdc;"></div>
<div style="position:absolute;left:112px;top:350px;width:1px;height:124px;background:#b8dcdc;"></div>
<div style="position:absolute;left:15px;top:334px;width:39px;height:16px;background:#c8c5c8;border-top:1px solid #fff;border-left:1px solid #fff;border-right:2px solid #000;border-bottom:2px solid #000;"></div>
<div style="position:absolute;left:21px;top:336px;font-family:'Liberation Sans',sans-serif;font-size:12px;line-height:12px;letter-spacing:2.6px;white-space:nowrap;text-shadow:0.7px 0.4px 0 currentColor;color:#000;">参量</div>
<div style="position:absolute;left:53px;top:334px;width:59px;height:16px;background:#c8c5c8;border-top:1px solid #fff;border-left:1px solid #fff;border-right:2px solid #000;border-bottom:2px solid #000;"></div>
<div style="position:absolute;left:59px;top:336px;font-family:'Liberation Sans',sans-serif;font-size:12px;line-height:12px;letter-spacing:2.6px;white-space:nowrap;text-shadow:0.7px 0.4px 0 currentColor;color:#000;">幅值</div>
<div style="position:absolute;left:111px;top:334px;width:50px;height:16px;background:#c8c5c8;border-top:1px solid #fff;border-left:1px solid #fff;border-right:2px solid #000;border-bottom:2px solid #000;"></div>
<div style="position:absolute;left:117px;top:336px;font-family:'Liberation Sans',sans-serif;font-size:12px;line-height:12px;letter-spacing:2.6px;white-space:nowrap;text-shadow:0.7px 0.4px 0 currentColor;color:#000;">相位</div>
<div style="position:absolute;left:18px;top:352px;font-family:'Liberation Mono',monospace;font-size:12px;line-height:12px;letter-spacing:-1.2px;white-space:nowrap;color:#000;">UAB</div>
<div style="position:absolute;left:59px;top:352px;font-family:'Liberation Mono',monospace;font-size:13px;line-height:12px;letter-spacing:-1.8px;white-space:nowrap;color:#000;">100.000</div>
<div style="position:absolute;left:116px;top:352px;font-family:'Liberation Mono',monospace;font-size:13px;line-height:12px;letter-spacing:-1.8px;white-space:nowrap;color:#000;">30.0</div>
<div style="position:absolute;left:18px;top:365px;font-family:'Liberation Mono',monospace;font-size:12px;line-height:12px;letter-spacing:-1.2px;white-space:nowrap;color:#000;">UBC</div>
<div style="position:absolute;left:59px;top:365px;font-family:'Liberation Mono',monospace;font-size:13px;line-height:12px;letter-spacing:-1.8px;white-space:nowrap;color:#000;">100.000</div>
<div style="position:absolute;left:116px;top:365px;font-family:'Liberation Mono',monospace;font-size:13px;line-height:12px;letter-spacing:-1.8px;white-space:nowrap;color:#000;">-90.0</div>
<div style="position:absolute;left:18px;top:379px;font-family:'Liberation Mono',monospace;font-size:12px;line-height:12px;letter-spacing:-1.2px;white-space:nowrap;color:#000;">UCA</div>
<div style="position:absolute;left:59px;top:379px;font-family:'Liberation Mono',monospace;font-size:13px;line-height:12px;letter-spacing:-1.8px;white-space:nowrap;color:#000;">100.000</div>
<div style="position:absolute;left:116px;top:379px;font-family:'Liberation Mono',monospace;font-size:13px;line-height:12px;letter-spacing:-1.8px;white-space:nowrap;color:#000;">150.0</div>
<div style="position:absolute;left:18px;top:392px;font-family:'Liberation Mono',monospace;font-size:12px;line-height:12px;letter-spacing:-1.2px;white-space:nowrap;color:#000;">Uo</div>
<div style="position:absolute;left:59px;top:392px;font-family:'Liberation Mono',monospace;font-size:13px;line-height:12px;letter-spacing:-1.8px;white-space:nowrap;color:#000;">0.000</div>
<div style="position:absolute;left:116px;top:392px;font-family:'Liberation Mono',monospace;font-size:13px;line-height:12px;letter-spacing:-1.8px;white-space:nowrap;color:#000;">180.0</div>
<div style="position:absolute;left:18px;top:406px;font-family:'Liberation Mono',monospace;font-size:12px;line-height:12px;letter-spacing:-1.2px;white-space:nowrap;color:#000;">U+</div>
<div style="position:absolute;left:59px;top:406px;font-family:'Liberation Mono',monospace;font-size:13px;line-height:12px;letter-spacing:-1.8px;white-space:nowrap;color:#000;">57.735</div>
<div style="position:absolute;left:116px;top:406px;font-family:'Liberation Mono',monospace;font-size:13px;line-height:12px;letter-spacing:-1.8px;white-space:nowrap;color:#000;">0.0</div>
<div style="position:absolute;left:18px;top:419px;font-family:'Liberation Mono',monospace;font-size:12px;line-height:12px;letter-spacing:-1.2px;white-space:nowrap;color:#000;">U-</div>
<div style="position:absolute;left:59px;top:419px;font-family:'Liberation Mono',monospace;font-size:13px;line-height:12px;letter-spacing:-1.8px;white-space:nowrap;color:#000;">0.000</div>
<div style="position:absolute;left:116px;top:419px;font-family:'Liberation Mono',monospace;font-size:13px;line-height:12px;letter-spacing:-1.8px;white-space:nowrap;color:#000;">0.0</div>
<div style="position:absolute;left:18px;top:433px;font-family:'Liberation Mono',monospace;font-size:12px;line-height:12px;letter-spacing:-1.2px;white-space:nowrap;color:#000;">Io</div>
<div style="position:absolute;left:59px;top:433px;font-family:'Liberation Mono',monospace;font-size:13px;line-height:12px;letter-spacing:-1.8px;white-space:nowrap;color:#000;">0.000</div>
<div style="position:absolute;left:116px;top:433px;font-family:'Liberation Mono',monospace;font-size:13px;line-height:12px;letter-spacing:-1.8px;white-space:nowrap;color:#000;">180.0</div>
<div style="position:absolute;left:18px;top:446px;font-family:'Liberation Mono',monospace;font-size:12px;line-height:12px;letter-spacing:-1.2px;white-space:nowrap;color:#000;">I+</div>
<div style="position:absolute;left:59px;top:446px;font-family:'Liberation Mono',monospace;font-size:13px;line-height:12px;letter-spacing:-1.8px;white-space:nowrap;color:#000;">5.000</div>
<div style="position:absolute;left:116px;top:446px;font-family:'Liberation Mono',monospace;font-size:13px;line-height:12px;letter-spacing:-1.8px;white-space:nowrap;color:#000;">0.0</div>
<div style="position:absolute;left:18px;top:460px;font-family:'Liberation Mono',monospace;font-size:12px;line-height:12px;letter-spacing:-1.2px;white-space:nowrap;color:#000;">I-</div>
<div style="position:absolute;left:59px;top:460px;font-family:'Liberation Mono',monospace;font-size:13px;line-height:12px;letter-spacing:-1.8px;white-space:nowrap;color:#000;">0.000</div>
<div style="position:absolute;left:116px;top:460px;font-family:'Liberation Mono',monospace;font-size:13px;line-height:12px;letter-spacing:-1.8px;white-space:nowrap;color:#000;">0.0</div>
<div style="position:absolute;left:15px;top:472px;width:145px;height:3px;background:#e8f0f0;"></div>
<div style="position:absolute;left:160px;top:333px;width:2px;height:142px;background:#fff;"></div>
<div style="position:absolute;left:13px;top:475px;width:149px;height:2px;background:#c8c5c8;"></div>
<div style="position:absolute;left:205px;top:243px;font-family:'Liberation Sans',sans-serif;font-size:12px;line-height:12px;letter-spacing:2.6px;white-space:nowrap;text-shadow:0.7px 0.4px 0 currentColor;color:#000;letter-spacing:2.5px;">开关变位确认时间</div>
<div style="position:absolute;left:301px;top:239px;width:41px;height:21px;background:#fff;border-top:1px solid #848284;border-left:1px solid #848284;border-right:1px solid #fff;border-bottom:1px solid #fff;box-shadow:inset 1px 1px 0 #000, inset -1px -1px 0 #c8c5c8;"></div>
<div style="position:absolute;left:304px;top:243px;font-family:'Liberation Sans',sans-serif;font-size:12px;line-height:12px;white-space:nowrap;color:#000;font-size:11px;">5</div>
<div style="position:absolute;left:343px;top:243px;font-family:'Liberation Mono',monospace;font-size:13px;line-height:12px;letter-spacing:-1.8px;white-space:nowrap;color:#000;font-size:11px;letter-spacing:0px;">ms</div>
<div style="position:absolute;left:208px;top:270px;width:152px;height:84px;border-top:1px solid #848284;border-left:1px solid #848284;border-right:1px solid #fff;border-bottom:1px solid #fff;box-shadow:inset -1px -1px 0 #848284, 1px 1px 0 #fff inset;"></div>
<div style="position:absolute;left:213px;top:265px;width:53px;height:12px;background:#c8c5c8;"></div>
<div style="position:absolute;left:216px;top:263px;font-family:'Liberation Sans',sans-serif;font-size:12px;line-height:12px;letter-spacing:2.6px;white-space:nowrap;text-shadow:0.7px 0.4px 0 currentColor;color:#000;">试验方式</div>
<svg style="position:absolute;left:222px;top:280px" width="12" height="12" viewBox="0 0 12 12"><circle cx="6" cy="6" r="5" fill="#fff"/><path d="M2.1 9.9 A5.5 5.5 0 0 1 9.9 2.1" stroke="#848284" stroke-width="1" fill="none"/><path d="M2.8 9.2 A4.5 4.5 0 0 1 9.2 2.8" stroke="#000" stroke-width="1" fill="none"/><path d="M9.9 2.1 A5.5 5.5 0 0 1 2.1 9.9" stroke="#fff" stroke-width="1" fill="none"/></svg>
<div style="position:absolute;left:240px;top:281px;font-family:'Liberation Sans',sans-serif;font-size:12px;line-height:12px;letter-spacing:2.6px;white-space:nowrap;text-shadow:0.7px 0.4px 0 currentColor;color:#000;">手动</div>
<svg style="position:absolute;left:222px;top:298px" width="12" height="12" viewBox="0 0 12 12"><circle cx="6" cy="6" r="5" fill="#fff"/><path d="M2.1 9.9 A5.5 5.5 0 0 1 9.9 2.1" stroke="#848284" stroke-width="1" fill="none"/><path d="M2.8 9.2 A4.5 4.5 0 0 1 9.2 2.8" stroke="#000" stroke-width="1" fill="none"/><path d="M9.9 2.1 A5.5 5.5 0 0 1 2.1 9.9" stroke="#fff" stroke-width="1" fill="none"/><circle cx="6" cy="6" r="2" fill="#000"/></svg>
<div style="position:absolute;left:240px;top:299px;font-family:'Liberation Sans',sans-serif;font-size:12px;line-height:12px;letter-spacing:2.6px;white-space:nowrap;text-shadow:0.7px 0.4px 0 currentColor;color:#000;">自动加</div>
<svg style="position:absolute;left:222px;top:316px" width="12" height="12" viewBox="0 0 12 12"><circle cx="6" cy="6" r="5" fill="#fff"/><path d="M2.1 9.9 A5.5 5.5 0 0 1 9.9 2.1" stroke="#848284" stroke-width="1" fill="none"/><path d="M2.8 9.2 A4.5 4.5 0 0 1 9.2 2.8" stroke="#000" stroke-width="1" fill="none"/><path d="M9.9 2.1 A5.5 5.5 0 0 1 2.1 9.9" stroke="#fff" stroke-width="1" fill="none"/></svg>
<div style="position:absolute;left:240px;top:317px;font-family:'Liberation Sans',sans-serif;font-size:12px;line-height:12px;letter-spacing:2.6px;white-space:nowrap;text-shadow:0.7px 0.4px 0 currentColor;color:#000;">自动减</div>
<div style="position:absolute;left:223px;top:335px;font-family:'Liberation Sans',sans-serif;font-size:12px;line-height:12px;letter-spacing:2.6px;white-space:nowrap;text-shadow:0.7px 0.4px 0 currentColor;color:#000;letter-spacing:2.5px;">间隔时间</div>
<div style="position:absolute;left:277px;top:331px;width:52px;height:19px;background:#fff;border-top:1px solid #848284;border-left:1px solid #848284;border-right:1px solid #fff;border-bottom:1px solid #fff;box-shadow:inset 1px 1px 0 #000, inset -1px -1px 0 #c8c5c8;"></div>
<div style="position:absolute;left:279px;top:335px;font-family:'Liberation Sans',sans-serif;font-size:12px;line-height:12px;white-space:nowrap;color:#000;font-size:11px;letter-spacing:-0.3px;">1000</div>
<div style="position:absolute;left:336px;top:335px;font-family:'Liberation Mono',monospace;font-size:13px;line-height:12px;letter-spacing:-1.8px;white-space:nowrap;color:#000;font-size:11px;letter-spacing:0px;">ms</div>
<div style="position:absolute;left:209px;top:359px;width:169px;height:116px;background:#ffe8ff;"></div>
<div style="position:absolute;left:209px;top:359px;width:2px;height:114px;background:#000;"></div>
<div style="position:absolute;left:209px;top:359px;width:169px;height:1px;background:#000;"></div>
<div style="position:absolute;left:211px;top:391px;width:165px;height:1px;background:#dcc4dc;"></div>
<div style="position:absolute;left:211px;top:404px;width:165px;height:1px;background:#dcc4dc;"></div>
<div style="position:absolute;left:211px;top:418px;width:165px;height:1px;background:#dcc4dc;"></div>
<div style="position:absolute;left:211px;top:431px;width:165px;height:1px;background:#dcc4dc;"></div>
<div style="position:absolute;left:211px;top:445px;width:165px;height:1px;background:#dcc4dc;"></div>
<div style="position:absolute;left:211px;top:458px;width:165px;height:1px;background:#dcc4dc;"></div>
<div style="position:absolute;left:211px;top:472px;width:165px;height:1px;background:#dcc4dc;"></div>
<div style="position:absolute;left:257px;top:376px;width:1px;height:96px;background:#dcc4dc;"></div>
<div style="position:absolute;left:317px;top:376px;width:1px;height:96px;background:#dcc4dc;"></div>
<div style="position:absolute;left:211px;top:360px;width:46px;height:16px;background:#c8c5c8;border-top:1px solid #fff;border-left:1px solid #fff;border-right:2px solid #000;border-bottom:2px solid #000;"></div>
<div style="position:absolute;left:216px;top:364px;font-family:'Liberation Sans',sans-serif;font-size:12px;line-height:12px;letter-spacing:2.6px;white-space:nowrap;text-shadow:0.7px 0.4px 0 currentColor;color:#000;">开入量</div>
<div style="position:absolute;left:256px;top:360px;width:61px;height:16px;background:#c8c5c8;border-top:1px solid #fff;border-left:1px solid #fff;border-right:2px solid #000;border-bottom:2px solid #000;"></div>
<div style="position:absolute;left:261px;top:364px;font-family:'Liberation Sans',sans-serif;font-size:12px;line-height:12px;letter-spacing:2.6px;white-space:nowrap;text-shadow:0.7px 0.4px 0 currentColor;color:#000;">动作时间</div>
<div style="position:absolute;left:316px;top:360px;width:61px;height:16px;background:#c8c5c8;border-top:1px solid #fff;border-left:1px solid #fff;border-right:2px solid #000;border-bottom:2px solid #000;"></div>
<div style="position:absolute;left:321px;top:364px;font-family:'Liberation Sans',sans-serif;font-size:12px;line-height:12px;letter-spacing:2.6px;white-space:nowrap;text-shadow:0.7px 0.4px 0 currentColor;color:#000;">返回时间</div>
<div style="position:absolute;left:214px;top:379px;font-family:'Liberation Serif',serif;font-size:12px;line-height:12px;white-space:nowrap;color:#000;font-size:11px;font-weight:bold;">A</div>
<div style="position:absolute;left:214px;top:392px;font-family:'Liberation Serif',serif;font-size:12px;line-height:12px;white-space:nowrap;color:#000;font-size:11px;font-weight:bold;">B</div>
<div style="position:absolute;left:214px;top:406px;font-family:'Liberation Serif',serif;font-size:12px;line-height:12px;white-space:nowrap;color:#000;font-size:11px;font-weight:bold;">C</div>
<div style="position:absolute;left:214px;top:419px;font-family:'Liberation Serif',serif;font-size:12px;line-height:12px;white-space:nowrap;color:#000;font-size:11px;font-weight:bold;">R</div>
<div style="position:absolute;left:214px;top:433px;font-family:'Liberation Serif',serif;font-size:12px;line-height:12px;white-space:nowrap;color:#000;font-size:11px;font-weight:bold;">a</div>
<div style="position:absolute;left:214px;top:446px;font-family:'Liberation Serif',serif;font-size:12px;line-height:12px;white-space:nowrap;color:#000;font-size:11px;font-weight:bold;">b</div>
<div style="position:absolute;left:214px;top:460px;font-family:'Liberation Serif',serif;font-size:12px;line-height:12px;white-space:nowrap;color:#000;font-size:11px;font-weight:bold;">c</div>
<div style="position:absolute;left:211px;top:472px;width:165px;height:3px;background:#f0e8f0;"></div>
<div style="position:absolute;left:376px;top:359px;width:2px;height:114px;background:#fff;"></div>
<div style="position:absolute;left:380px;top:359px;width:255px;height:116px;background:#ffe8ff;"></div>
<div style="position:absolute;left:380px;top:359px;width:2px;height:114px;background:#000;"></div>
<div style="position:absolute;left:380px;top:359px;width:255px;height:1px;background:#000;"></div>
<div style="position:absolute;left:382px;top:395px;width:231px;height:1px;background:#dcc4dc;"></div>
<div style="position:absolute;left:382px;top:413px;width:231px;height:1px;background:#dcc4dc;"></div>
<div style="position:absolute;left:382px;top:430px;width:231px;height:1px;background:#dcc4dc;"></div>
<div style="position:absolute;left:382px;top:448px;width:231px;height:1px;background:#dcc4dc;"></div>
<div style="position:absolute;left:382px;top:465px;width:231px;height:1px;background:#dcc4dc;"></div>
<div style="position:absolute;left:404px;top:376px;width:1px;height:96px;background:#dcc4dc;"></div>
<div style="position:absolute;left:445px;top:376px;width:1px;height:96px;background:#dcc4dc;"></div>
<div style="position:absolute;left:500px;top:376px;width:1px;height:96px;background:#dcc4dc;"></div>
<div style="position:absolute;left:554px;top:376px;width:1px;height:96px;background:#dcc4dc;"></div>
<div style="position:absolute;left:382px;top:360px;width:22px;height:16px;background:#c8c5c8;border-top:1px solid #fff;border-left:1px solid #fff;border-right:2px solid #000;border-bottom:2px solid #000;"></div>
<div style="position:absolute;left:403px;top:360px;width:42px;height:16px;background:#c8c5c8;border-top:1px solid #fff;border-left:1px solid #fff;border-right:2px solid #000;border-bottom:2px solid #000;"></div>
<div style="position:absolute;left:409px;top:364px;font-family:'Liberation Sans',sans-serif;font-size:12px;line-height:12px;letter-spacing:2.6px;white-space:nowrap;text-shadow:0.7px 0.4px 0 currentColor;color:#000;">参量</div>
<div style="position:absolute;left:444px;top:360px;width:56px;height:16px;background:#c8c5c8;border-top:1px solid #fff;border-left:1px solid #fff;border-right:2px solid #000;border-bottom:2px solid #000;"></div>
<div style="position:absolute;left:450px;top:364px;font-family:'Liberation Sans',sans-serif;font-size:12px;line-height:12px;letter-spacing:2.6px;white-space:nowrap;text-shadow:0.7px 0.4px 0 currentColor;color:#000;">动作</div>
<div style="position:absolute;left:499px;top:360px;width:55px;height:16px;background:#c8c5c8;border-top:1px solid #fff;border-left:1px solid #fff;border-right:2px solid #000;border-bottom:2px solid #000;"></div>
<div style="position:absolute;left:505px;top:364px;font-family:'Liberation Sans',sans-serif;font-size:12px;line-height:12px;letter-spacing:2.6px;white-space:nowrap;text-shadow:0.7px 0.4px 0 currentColor;color:#000;">返回</div>
<div style="position:absolute;left:553px;top:360px;width:60px;height:16px;background:#c8c5c8;border-top:1px solid #fff;border-left:1px solid #fff;border-right:2px solid #000;border-bottom:2px solid #000;"></div>
<div style="position:absolute;left:559px;top:364px;font-family:'Liberation Sans',sans-serif;font-size:12px;line-height:12px;letter-spacing:2.6px;white-space:nowrap;text-shadow:0.7px 0.4px 0 currentColor;color:#000;">返回系数</div>
<div style="position:absolute;left:386px;top:381px;width:12px;height:12px;background:#fff;border:2px solid #000;"></div>
<div style="position:absolute;left:408px;top:382px;font-family:'Liberation Mono',monospace;font-size:12px;line-height:12px;letter-spacing:-1.2px;white-space:nowrap;color:#000;">UA</div>
<div style="position:absolute;left:386px;top:399px;width:12px;height:12px;background:#fff;border:2px solid #000;"></div>
<div style="position:absolute;left:408px;top:400px;font-family:'Liberation Mono',monospace;font-size:12px;line-height:12px;letter-spacing:-1.2px;white-space:nowrap;color:#000;">UB</div>
<div style="position:absolute;left:386px;top:416px;width:12px;height:12px;background:#fff;border:2px solid #000;"></div>
<div style="position:absolute;left:408px;top:417px;font-family:'Liberation Mono',monospace;font-size:12px;line-height:12px;letter-spacing:-1.2px;white-space:nowrap;color:#000;">UC</div>
<div style="position:absolute;left:386px;top:434px;width:12px;height:12px;background:#fff;border:2px solid #000;"></div>
<div style="position:absolute;left:408px;top:434px;font-family:'Liberation Mono',monospace;font-size:12px;line-height:12px;letter-spacing:-1.2px;white-space:nowrap;color:#000;">IA</div>
<div style="position:absolute;left:386px;top:451px;width:12px;height:12px;background:#fff;border:2px solid #000;"></div>
<div style="position:absolute;left:408px;top:452px;font-family:'Liberation Mono',monospace;font-size:12px;line-height:12px;letter-spacing:-1.2px;white-space:nowrap;color:#000;">IB</div>
<div style="position:absolute;left:386px;top:468px;width:12px;height:12px;background:#fff;border:2px solid #000;"></div>
<div style="position:absolute;left:408px;top:469px;font-family:'Liberation Mono',monospace;font-size:12px;line-height:12px;letter-spacing:-1.2px;white-space:nowrap;color:#000;">IC</div>
<div style="position:absolute;left:382px;top:472px;width:252px;height:3px;background:#f0e8f0;"></div>
<div style="position:absolute;left:613px;top:360px;width:18px;height:112px;background:repeating-conic-gradient(#fff 0% 25%, #c8c5c8 0% 50%) 0 0/2px 2px;"></div>
<div style="position:absolute;left:613px;top:360px;width:18px;height:16px;background:#c8c5c8;border-top:1px solid #fff;border-left:1px solid #fff;border-right:1px solid #000;border-bottom:1px solid #000;box-shadow:inset -1px -1px 0 #848284;"></div>
<svg style="position:absolute;left:617px;top:365px" width="9" height="5" viewBox="0 0 9 5"><path d="M0.5 4.5 H8.5 L4.5 0.5 Z" fill="#000"/></svg>
<div style="position:absolute;left:613px;top:376px;width:18px;height:13px;background:#c8c5c8;border-top:1px solid #fff;border-left:1px solid #fff;border-right:1px solid #000;border-bottom:1px solid #000;box-shadow:inset -1px -1px 0 #848284;"></div>
<div style="position:absolute;left:613px;top:457px;width:18px;height:16px;background:#c8c5c8;border-top:1px solid #fff;border-left:1px solid #fff;border-right:1px solid #000;border-bottom:1px solid #000;box-shadow:inset -1px -1px 0 #848284;"></div>
<svg style="position:absolute;left:617px;top:463px" width="9" height="5" viewBox="0 0 9 5"><path d="M0.5 0.5 H8.5 L4.5 4.5 Z" fill="#000"/></svg>
<div style="position:absolute;left:631px;top:359px;width:2px;height:116px;background:#fff;"></div>
<div style="position:absolute;left:633px;top:359px;width:4px;height:116px;background:#e8e6e8;"></div>
<div style="position:absolute;left:10px;top:475px;width:627px;height:2px;background:#ecebec;"></div>
<div style="position:absolute;left:10px;top:477px;width:627px;height:22px;background:#c8c5c8;"></div>
<div style="position:absolute;left:13px;top:483px;font-family:'Liberation Sans',sans-serif;font-size:12px;line-height:12px;letter-spacing:2.6px;white-space:nowrap;text-shadow:0.7px 0.4px 0 currentColor;color:#000;">就绪</div>
<div style="position:absolute;left:297px;top:480px;width:102px;height:18px;border-top:1px solid #848284;border-left:1px solid #848284;border-right:1px solid #fff;border-bottom:1px solid #fff;"></div>
<div style="position:absolute;left:299px;top:483px;font-family:'Liberation Sans',sans-serif;font-size:12px;line-height:12px;letter-spacing:2.6px;white-space:nowrap;text-shadow:0.7px 0.4px 0 currentColor;color:#000;letter-spacing:2.6px;">运行时间</div>
<div style="position:absolute;left:347px;top:484px;font-family:'Liberation Mono',monospace;font-size:13px;line-height:12px;letter-spacing:-1.8px;white-space:nowrap;color:#000;">:</div>
<div style="position:absolute;left:356px;top:484px;font-family:'Liberation Mono',monospace;font-size:13px;line-height:12px;letter-spacing:-1.8px;white-space:nowrap;color:#000;">0.00s</div>
<div style="position:absolute;left:402px;top:480px;width:234px;height:18px;border-top:1px solid #848284;border-left:1px solid #848284;border-right:1px solid #fff;border-bottom:1px solid #fff;"></div>
<div style="position:absolute;left:405px;top:482px;font-family:'Liberation Sans',sans-serif;font-size:12px;line-height:12px;letter-spacing:2.6px;white-space:nowrap;text-shadow:0.7px 0.4px 0 currentColor;color:#000;letter-spacing:2.6px;">开关量</div>
<div style="position:absolute;left:440px;top:484px;font-family:'Liberation Mono',monospace;font-size:13px;line-height:12px;letter-spacing:-1.8px;white-space:nowrap;color:#000;">:</div>
<div style="position:absolute;left:446px;top:483px;font-family:'Liberation Mono',monospace;font-size:13px;line-height:12px;letter-spacing:-1.8px;white-space:nowrap;color:#000;font-weight:bold;font-size:11px;letter-spacing:0;">A</div>
<div style="position:absolute;left:453px;top:483px;width:10px;height:11px;background:#8a888a;border-radius:50%;"></div>
<div style="position:absolute;left:469px;top:483px;font-family:'Liberation Mono',monospace;font-size:13px;line-height:12px;letter-spacing:-1.8px;white-space:nowrap;color:#000;font-weight:bold;font-size:11px;letter-spacing:0;">B</div>
<div style="position:absolute;left:477px;top:483px;width:10px;height:11px;background:#8a888a;border-radius:50%;"></div>
<div style="position:absolute;left:493px;top:483px;font-family:'Liberation Mono',monospace;font-size:13px;line-height:12px;letter-spacing:-1.8px;white-space:nowrap;color:#000;font-weight:bold;font-size:11px;letter-spacing:0;">C</div>
<div style="position:absolute;left:500px;top:483px;width:10px;height:11px;background:#8a888a;border-radius:50%;"></div>
<div style="position:absolute;left:516px;top:483px;font-family:'Liberation Mono',monospace;font-size:13px;line-height:12px;letter-spacing:-1.8px;white-space:nowrap;color:#000;font-weight:bold;font-size:11px;letter-spacing:0;">R</div>
<div style="position:absolute;left:524px;top:483px;width:10px;height:11px;background:#8a888a;border-radius:50%;"></div>
<div style="position:absolute;left:540px;top:483px;font-family:'Liberation Mono',monospace;font-size:13px;line-height:12px;letter-spacing:-1.8px;white-space:nowrap;color:#000;font-weight:bold;font-size:11px;letter-spacing:0;">a</div>
<div style="position:absolute;left:547px;top:483px;width:10px;height:11px;background:#8a888a;border-radius:50%;"></div>
<div style="position:absolute;left:563px;top:483px;font-family:'Liberation Mono',monospace;font-size:13px;line-height:12px;letter-spacing:-1.8px;white-space:nowrap;color:#000;font-weight:bold;font-size:11px;letter-spacing:0;">b</div>
<div style="position:absolute;left:571px;top:483px;width:10px;height:11px;background:#8a888a;border-radius:50%;"></div>
<div style="position:absolute;left:587px;top:483px;font-family:'Liberation Mono',monospace;font-size:13px;line-height:12px;letter-spacing:-1.8px;white-space:nowrap;color:#000;font-weight:bold;font-size:11px;letter-spacing:0;">c</div>
<div style="position:absolute;left:594px;top:483px;width:10px;height:11px;background:#8a888a;border-radius:50%;"></div>
</body></html>
